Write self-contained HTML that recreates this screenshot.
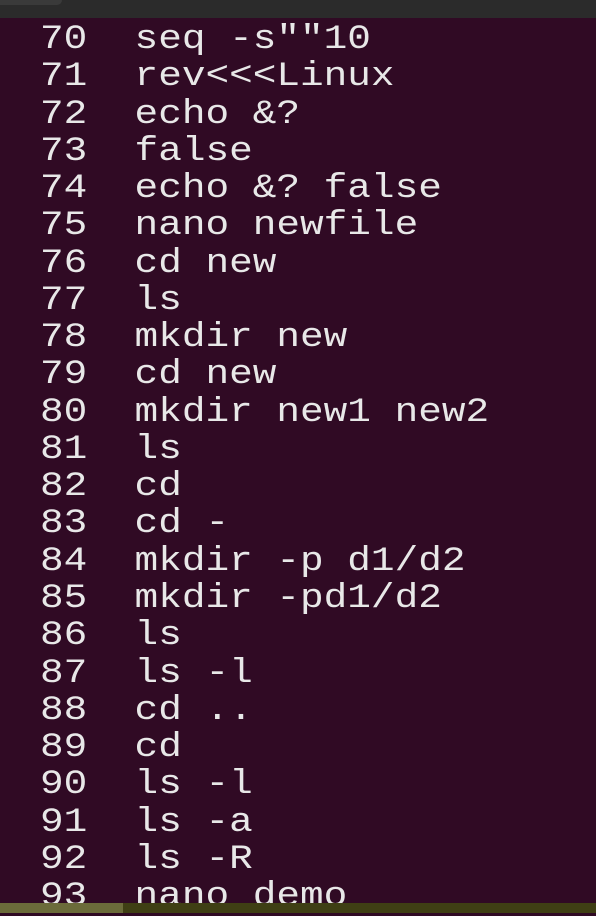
<!DOCTYPE html>
<html><head><style>
body{margin:0;width:596px;height:913px;overflow:hidden;background:#300a24;position:relative;}
.top{position:absolute;left:0;top:0;width:596px;height:18px;background:#2b2b2b;}
.top .tab{position:absolute;left:0;top:0;width:62px;height:5px;background:#3a3a3a;border-radius:0 0 6px 0;}
.t{position:absolute;left:40px;top:20px;margin:0;font-family:"Liberation Mono",monospace;font-size:39.4px;color:#e8e8e8;}
.t div{height:37.27px;line-height:37.27px;white-space:pre;transform:scaleY(0.86);transform-origin:0 60%;}
.tb{position:absolute;left:0;top:903px;width:596px;height:10px;background:#3f3f14;}
.tb .l{position:absolute;left:0;top:0;width:123px;height:10px;background:#6b6b3a;}
</style></head><body>
<div class="top"><div class="tab"></div></div>
<div class="t">
<div>70  seq -s""10</div>
<div>71  rev&lt;&lt;&lt;Linux</div>
<div>72  echo &amp;?</div>
<div>73  false</div>
<div>74  echo &amp;? false</div>
<div>75  nano newfile</div>
<div>76  cd new</div>
<div>77  ls</div>
<div>78  mkdir new</div>
<div>79  cd new</div>
<div>80  mkdir new1 new2</div>
<div>81  ls</div>
<div>82  cd</div>
<div>83  cd -</div>
<div>84  mkdir -p d1/d2</div>
<div>85  mkdir -pd1/d2</div>
<div>86  ls</div>
<div>87  ls -l</div>
<div>88  cd ..</div>
<div>89  cd</div>
<div>90  ls -l</div>
<div>91  ls -a</div>
<div>92  ls -R</div>
<div>93  nano demo</div>
</div>
<div class="tb"><div class="l"></div></div>
</body></html>
